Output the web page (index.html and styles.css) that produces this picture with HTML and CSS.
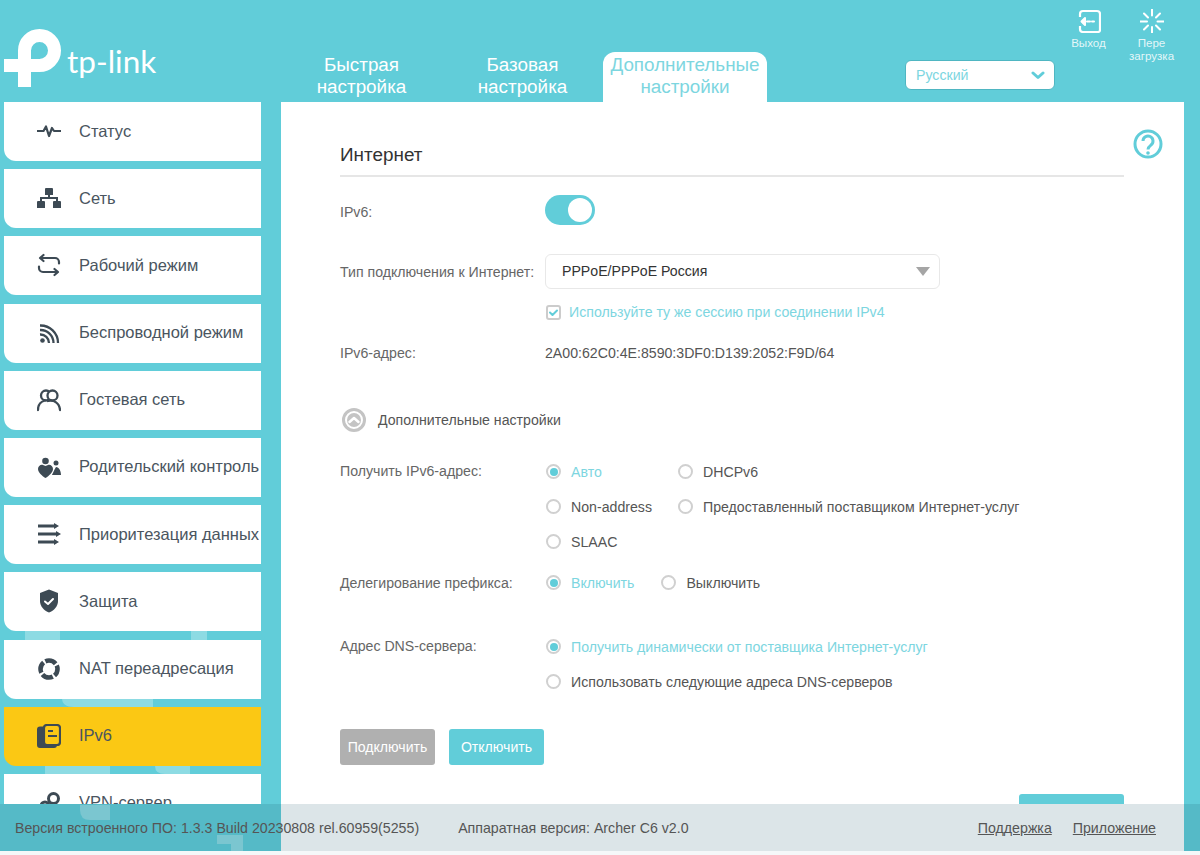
FILE: index.html
```html
<!DOCTYPE html>
<html lang="ru">
<head>
<meta charset="utf-8">
<title>TP-Link Archer C6</title>
<link rel="stylesheet" href="styles.css">
</head>
<body>
<div class="app">
  <svg class="pattern" viewBox="0 0 281 851" width="281" height="851" aria-hidden="true">
    <path d="M25 631H60V640H25ZM191 631H207V640H191Z"/>
    <path d="M62 698H153V707H74Q62 707 62 698Z"/>
    <path d="M45 766H110V774H45ZM155 766H190V774H165Q155 774 155 766Z"/>
    <path d="M80 805H110V820H90Q80 820 80 810Z"/>
    <path d="M217 835H243V851H231V844H217Z"/>
  </svg>

  <header class="header">
    <div class="brand">
      <svg class="brand-mark" viewBox="0 0 64 64" width="64" height="64" aria-hidden="true">
        <path d="M4 40.500H39.500A15 15 0 0 0 39.500 10.500A15 15 0 0 0 24.500 25.500V62" fill="none" stroke="#fff" stroke-width="13" stroke-linejoin="round"/>
      </svg>
      <span class="brand-name">tp-link</span>
    </div>
    <nav class="tabs">
      <a class="tab">Быстрая<br>настройка</a>
      <a class="tab">Базовая<br>настройка</a>
      <a class="tab tab-active">Дополнительные<br>настройки</a>
    </nav>
    <div class="lang">
      <span>Русский</span>
      <svg viewBox="0 0 14 9" width="14" height="9" aria-hidden="true"><path d="M2 2l5 4.500L12 2" fill="none" stroke="#61cdd9" stroke-width="3" stroke-linecap="round" stroke-linejoin="round"/></svg>
    </div>
    <div class="tools">
      <div class="tool">
        <svg viewBox="0 0 24 24" width="24" height="24" aria-hidden="true"><path d="M3 8V5a3 3 0 0 1 3-3h14a3 3 0 0 1 3 3v16a2 2 0 0 1-2 2H6a3 3 0 0 1-3-3v-3" fill="none" stroke="#fff" stroke-width="2.200"/><path d="M10 12.500h3M15 12.500h2M8 9l-3.500 3.500L8 16Z" fill="#fff" stroke="#fff" stroke-width="2" stroke-linecap="round" stroke-linejoin="round"/></svg>
        <span>Выход</span>
      </div>
      <div class="tool">
        <svg viewBox="0 0 24 24" width="24" height="24" aria-hidden="true"><path d="M12 .500v6M12 18v6M.500 12.500h6.500M17.500 12.500h6M4 4.500l4 4M16 16.500l4 4M20 4.500l-4 4M8 16.500l-4 4" fill="none" stroke="#fff" stroke-width="2" stroke-linecap="round"/></svg>
        <span>Пере<br>загрузка</span>
      </div>
    </div>
  </header>

  <div class="body">
    <ul class="menu">
      <li class="item"><svg class="ico" viewBox="0 0 24 24"><path d="M0 12H6.500L9 7.500L12 17L15 9L17 12H24" fill="none" stroke="#3d4a54" stroke-width="2.200" stroke-linejoin="round"/></svg><span>Статус</span></li>
      <li class="item"><svg class="ico" viewBox="0 0 24 24"><path d="M9 2h6a1 1 0 0 1 1 1v6H8V3a1 1 0 0 1 1-1ZM0 16a1 1 0 0 1 1-1h6a1 1 0 0 1 1 1v6H0ZM16 16a1 1 0 0 1 1-1h6a1 1 0 0 1 1 1v6h-8Z" fill="#3d4a54"/><path d="M12 9v3M4 15v-3h16v3" fill="none" stroke="#3d4a54" stroke-width="2"/></svg><span>Сеть</span></li>
      <li class="item"><svg class="ico" viewBox="0 0 24 24"><path d="M6.500 2L3 5l3.500 3M4 5H18a4 4 0 0 1 4 4v1.500M17.500 16l3.500 3-3.500 3M20 19H6a4 4 0 0 1-4-4v-1.500" fill="none" stroke="#3d4a54" stroke-width="2.200" stroke-linecap="round" stroke-linejoin="round"/></svg><span>Рабочий режим</span></li>
      <li class="item"><svg class="ico" viewBox="0 0 24 24"><circle cx="5.500" cy="19.500" r="2.300" fill="#3d4a54"/><path d="M3 13.500a8.500 8.500 0 0 1 9 8.500M3 9a13 13 0 0 1 13.500 13M3 4.500a17.500 17.500 0 0 1 18 17.500" fill="none" stroke="#3d4a54" stroke-width="2.300"/></svg><span>Беспроводной режим</span></li>
      <li class="item"><svg class="ico" viewBox="0 0 24 24"><circle cx="9" cy="7.500" r="5" fill="none" stroke="#3d4a54" stroke-width="2.300"/><circle cx="15.500" cy="7.500" r="5" fill="#fff" stroke="#3d4a54" stroke-width="2.300"/><path d="M1 22c0-5 3-8.500 7-9.500M11 13c6-1.500 11.500 2 12 9" fill="none" stroke="#3d4a54" stroke-width="2.300" stroke-linecap="round"/></svg><span>Гостевая сеть</span></li>
      <li class="item"><svg class="ico" viewBox="0 0 24 24"><circle cx="8.500" cy="6" r="3.300" fill="#3d4a54"/><circle cx="19" cy="8" r="2.500" fill="#3d4a54"/><path d="M1 14c0-3 3-5 5-4l2.500 1 2.500-1c2-1 5 1 5 4 0 3-4 7-7.500 9C5 21 1 17 1 14ZM15 20c1-2 2-5 4-8 3 0 5 4 5 8Z" fill="#3d4a54"/></svg><span>Родительский контроль</span></li>
      <li class="item"><svg class="ico" viewBox="0 0 24 24"><path d="M1 4H17M1 12H20M1 20H17" fill="none" stroke="#3d4a54" stroke-width="2.800"/><path d="M17 1l5 3-5 3ZM19 9l5 3-5 3ZM17 17l5 3-5 3Z" fill="#3d4a54"/></svg><span>Приоритезация данных</span></li>
      <li class="item"><svg class="ico" viewBox="0 0 24 24"><path d="M12 .500L21 4v8c0 5.500-4 9.500-9 11.500C7 21.500 3 17.500 3 12V4Z" fill="#3d4a54"/><path d="M8 12.500l3 2.500 5-5" fill="none" stroke="#fff" stroke-width="2" stroke-linecap="round" stroke-linejoin="round"/></svg><span>Защита</span></li>
      <li class="item"><svg class="ico" viewBox="0 0 24 24"><circle class="nat-ring" cx="12" cy="12" r="8.500"/></svg><span>NAT переадресация</span></li>
      <li class="item item-active"><svg class="ico" viewBox="0 0 24 24"><path d="M7 2.500H3a3 3 0 0 0-3 3V21a3 3 0 0 0 3 3h14a3 3 0 0 0 3-3v-1H7Z" fill="#3d4a54"/><rect x="7" y="1" width="16" height="20" rx="3" fill="#fbc814" stroke="#3d4a54" stroke-width="2.200"/><path d="M11 7h5M11 12h9" stroke="#3d4a54" stroke-width="2"/></svg><span>IPv6</span></li>
      <li class="item"><svg class="ico" viewBox="0 0 24 24"><path d="M3 21l7-7" fill="none" stroke="#3d4a54" stroke-width="3"/><circle cx="16.500" cy="7.500" r="5" fill="none" stroke="#3d4a54" stroke-width="3"/><circle cx="8" cy="15" r="4" fill="none" stroke="#3d4a54" stroke-width="3"/></svg><span>VPN-сервер</span></li>
    </ul>

    <main class="panel">
      <svg class="help" viewBox="0 0 30 30" width="30" height="30" aria-hidden="true"><circle cx="15" cy="15" r="13" fill="none" stroke="#61cdd9" stroke-width="3"/><path d="M10 12a5 5 0 1 1 8 4c-2 1.500-3 2.200-3 4.500" fill="none" stroke="#61cdd9" stroke-width="3"/><circle cx="15" cy="24" r="1.800" fill="#61cdd9"/></svg>
      <h2 class="title">Интернет</h2>

      <div class="row row-toggle">
        <span class="label">IPv6:</span>
        <div class="toggle"><i></i></div>
      </div>
      <div class="row row-select">
        <span class="label">Тип подключения к Интернет:</span>
        <div class="select"><span>PPPoE/PPPoE Россия</span><i></i></div>
      </div>
      <div class="row row-check">
        <span></span>
        <label class="check"><svg viewBox="0 0 15 15" width="15" height="15" aria-hidden="true"><rect x="1" y="1" width="13" height="13" rx="2" fill="#fff" stroke="#ccc" stroke-width="2"/><path d="M4 7.500l2.500 2.500 4.500-4.500" fill="none" stroke="#61cdd9" stroke-width="2" stroke-linecap="round" stroke-linejoin="round"/></svg>Используйте ту же сессию при соединении IPv4</label>
      </div>
      <div class="row row-ip">
        <span class="label">IPv6-адрес:</span>
        <span class="value">2A00:62C0:4E:8590:3DF0:D139:2052:F9D/64</span>
      </div>
      <div class="adv">
        <svg viewBox="0 0 24 24" width="24" height="24" aria-hidden="true"><circle cx="12" cy="12" r="10.500" fill="#fff" stroke="#c4c4c4" stroke-width="3"/><circle cx="12" cy="12" r="7" fill="#c4c4c4"/><path d="M7.500 14l4.500-4 4.500 4" fill="none" stroke="#fff" stroke-width="2.500" stroke-linecap="round" stroke-linejoin="round"/></svg>
        <span>Дополнительные настройки</span>
      </div>
      <div class="row row-addr">
        <span class="label">Получить IPv6-адрес:</span>
        <div class="radio-grid">
          <label class="radio on"><i></i>Авто</label>
          <label class="radio"><i></i>DHCPv6</label>
          <label class="radio"><i></i>Non-address</label>
          <label class="radio"><i></i>Предоставленный поставщиком Интернет-услуг</label>
          <label class="radio"><i></i>SLAAC</label>
        </div>
      </div>
      <div class="row row-prefix">
        <span class="label">Делегирование префикса:</span>
        <div class="radio-line">
          <label class="radio on"><i></i>Включить</label>
          <label class="radio"><i></i>Выключить</label>
        </div>
      </div>
      <div class="row row-dns">
        <span class="label">Адрес DNS-сервера:</span>
        <div class="radio-stack">
          <label class="radio on"><i></i>Получить динамически от поставщика Интернет-услуг</label>
          <label class="radio"><i></i>Использовать следующие адреса DNS-серверов</label>
        </div>
      </div>
      <div class="actions">
        <button class="btn btn-off">Подключить</button>
        <button class="btn">Отключить</button>
      </div>
      <div class="save-wrap"><button class="btn btn-save"></button></div>
    </main>
  </div>

  <footer class="footer">
    <span class="fw">Версия встроенного ПО: 1.3.3 Build 20230808 rel.60959(5255)</span>
    <span class="hw">Аппаратная версия: Archer C6 v2.0</span>
    <span class="links"><a>Поддержка</a><a>Приложение</a></span>
  </footer>
</div>
</body>
</html>
```

FILE: styles.css
```css
* { box-sizing: border-box; }
html, body { margin: 0; height: 100%; overflow: hidden; }
body {
  background: #f5f8f9;
  font-family: "Liberation Sans", Arial, sans-serif;
  font-size: 14.15px;
  color: #555;
}
.app {
  position: relative;
  height: 851px;
  display: flex;
  flex-direction: column;
  background: linear-gradient(to right, #61cdd9 281px, #fff 281px, #fff 1184px, #61cdd9 1184px);
}
.pattern { position: absolute; left: 0; top: 0; fill: rgba(255,255,255,.28); }

/* header */
.header {
  position: relative;
  height: 102px;
  flex: none;
  display: flex;
  background: #61cdd9;
}
.brand {
  width: 281px;
  flex: none;
  padding-top: 25px;
  display: flex;
  align-items: flex-start;
}
.brand-mark { flex: none; }
.brand-name {
  margin: 18px 0 0 3px;
  color: #fff;
  font-family: Lato, sans-serif;
  font-size: 31.5px;
  line-height: 36px;
  font-weight: 400;
}
.tabs { display: flex; align-self: flex-end; width: 486px; flex: none; }
.tab {
  width: 161px;
  height: 50px;
  padding-top: 2px;
  text-align: center;
  color: #fff;
  font-size: 18.85px;
  line-height: 22px;
}
.tab-active {
  width: 164px;
  background: #fff;
  color: #7dd6df;
  border-radius: 12px 12px 0 0;
}
.lang {
  width: 150px;
  height: 30px;
  margin: 60px 0 0 138px;
  padding: 0 9px 0 10px;
  flex: none;
  display: flex;
  align-items: center;
  justify-content: space-between;
  background: #fff;
  border: 1px solid #4fb6c2;
  border-radius: 6px;
  color: #7dd6df;
}
.tools { display: flex; margin-left: 2px; padding-top: 9px; }
.tool {
  width: 63px;
  display: flex;
  flex-direction: column;
  align-items: center;
  color: rgba(255,255,255,.85);
  font-size: 11.6px;
  line-height: 13px;
  text-align: center;
}
.tool span { margin-top: 3px; }

/* body */
.body { flex: 1; min-height: 0; display: flex; overflow: hidden; position: relative; }
.menu {
  width: 281px;
  flex: none;
  margin: 0;
  padding: 0 20px 0 4px;
  list-style: none;
  display: flex;
  flex-direction: column;
  gap: 8.2px;
}
.item {
  height: 59px;
  flex: none;
  padding: 0 0 1px 33px;
  display: flex;
  align-items: center;
  gap: 18px;
  background: #fff;
  border-radius: 0 0 0 12px;
  color: #4a5560;
  font-size: 16.5px;
  white-space: nowrap;
  overflow: hidden;
}
.item-active { background: #fbc814; }
.ico { width: 24px; height: 24px; flex: none; }
.nat-ring {
  fill: none;
  stroke: #3d4a54;
  stroke-width: 4.6;
  stroke-dasharray: 11.3 2.050;
  stroke-dashoffset: 4;
}

/* panel */
.panel {
  position: relative;
  width: 903px;
  flex: none;
  padding: 40px 60px 0 59px;
  background: #fff;
  overflow: hidden;
}
.help { position: absolute; left: 852px; top: 27px; }
.title {
  margin: 0;
  height: 35px;
  border-bottom: 2px solid #e6e6e6;
  font-size: 18.9px;
  line-height: 25px;
  font-weight: 400;
  color: #333;
}
.row { display: grid; grid-template-columns: 205px 1fr; align-items: center; }
.label { color: #666; }
.value { color: #555; }
.row-toggle { margin-top: 18px; height: 30px; }
.row-toggle .label { padding-top: 3px; }
.row-select { margin-top: 29px; height: 35px; }
.row-check { margin-top: 13px; height: 20px; }
.row-ip { margin-top: 21px; height: 20px; }
.row-addr { margin-top: 27px; align-items: start; }
.row-prefix { margin-top: 21px; height: 20px; }
.row-dns { margin-top: 44px; align-items: start; }
.row-addr .label, .row-dns .label { line-height: 18px; }

.toggle {
  width: 50px;
  height: 30px;
  padding: 3px;
  border-radius: 15px;
  background: #61cdd9;
  display: flex;
  justify-content: flex-end;
}
.toggle i { width: 24px; height: 24px; border-radius: 50%; background: #fff; }
.select {
  width: 395px;
  height: 35px;
  padding: 0 9px 1px 16px;
  display: flex;
  align-items: center;
  justify-content: space-between;
  border: 1px solid #e8e8e8;
  border-radius: 6px;
  color: #333;
}
.select i {
  width: 0; height: 0;
  border-left: 7.5px solid transparent;
  border-right: 7.5px solid transparent;
  border-top: 9px solid #a5a5a5;
}
.check { display: flex; align-items: center; gap: 8px; padding-left: 1px; color: #7dd6df; }

.adv { margin-top: 42px; height: 30px; display: flex; align-items: center; gap: 12px; padding-left: 2px; color: #555; }

.radio { height: 20px; display: flex; align-items: center; padding: 0 0 1px 1px; gap: 10px; color: #555; white-space: nowrap; }
.radio i {
  width: 15px; height: 15px; flex: none;
  border: 2px solid #d0d0d0;
  border-radius: 50%;
  display: flex;
  align-items: center;
  justify-content: center;
  background: #fff;
}
.radio.on { color: #7dd6df; }
.radio.on i::after { content: ""; width: 8px; height: 8px; border-radius: 50%; background: #61cdd9; }
.radio-grid { display: grid; grid-template-columns: 132px 1fr; row-gap: 15px; }
.radio-line { display: flex; gap: 26px; }
.radio-stack { display: flex; flex-direction: column; gap: 15px; }

.actions { margin-top: 37px; display: flex; gap: 14px; }
.btn {
  width: 95px;
  height: 36px;
  padding: 0;
  border: 0;
  border-radius: 3px;
  background: #61cdd9;
  color: #fff;
  font-family: inherit;
  font-size: 14.1px;
}
.btn-off { background: #b0b0b0; }
.save-wrap { margin-top: 29px; display: flex; justify-content: flex-end; }
.btn-save { width: 105px; }

/* footer */
.footer {
  position: relative;
  height: 47px;
  flex: none;
  display: flex;
  align-items: center;
  padding: 0 44px 0 15px;
  background: rgba(22,82,102,.15);
  color: #555;
  font-size: 14.2px;
}
.hw { margin-left: 39px; }
.links { margin-left: auto; display: flex; gap: 21px; }
.links a { text-decoration: underline; }
```
